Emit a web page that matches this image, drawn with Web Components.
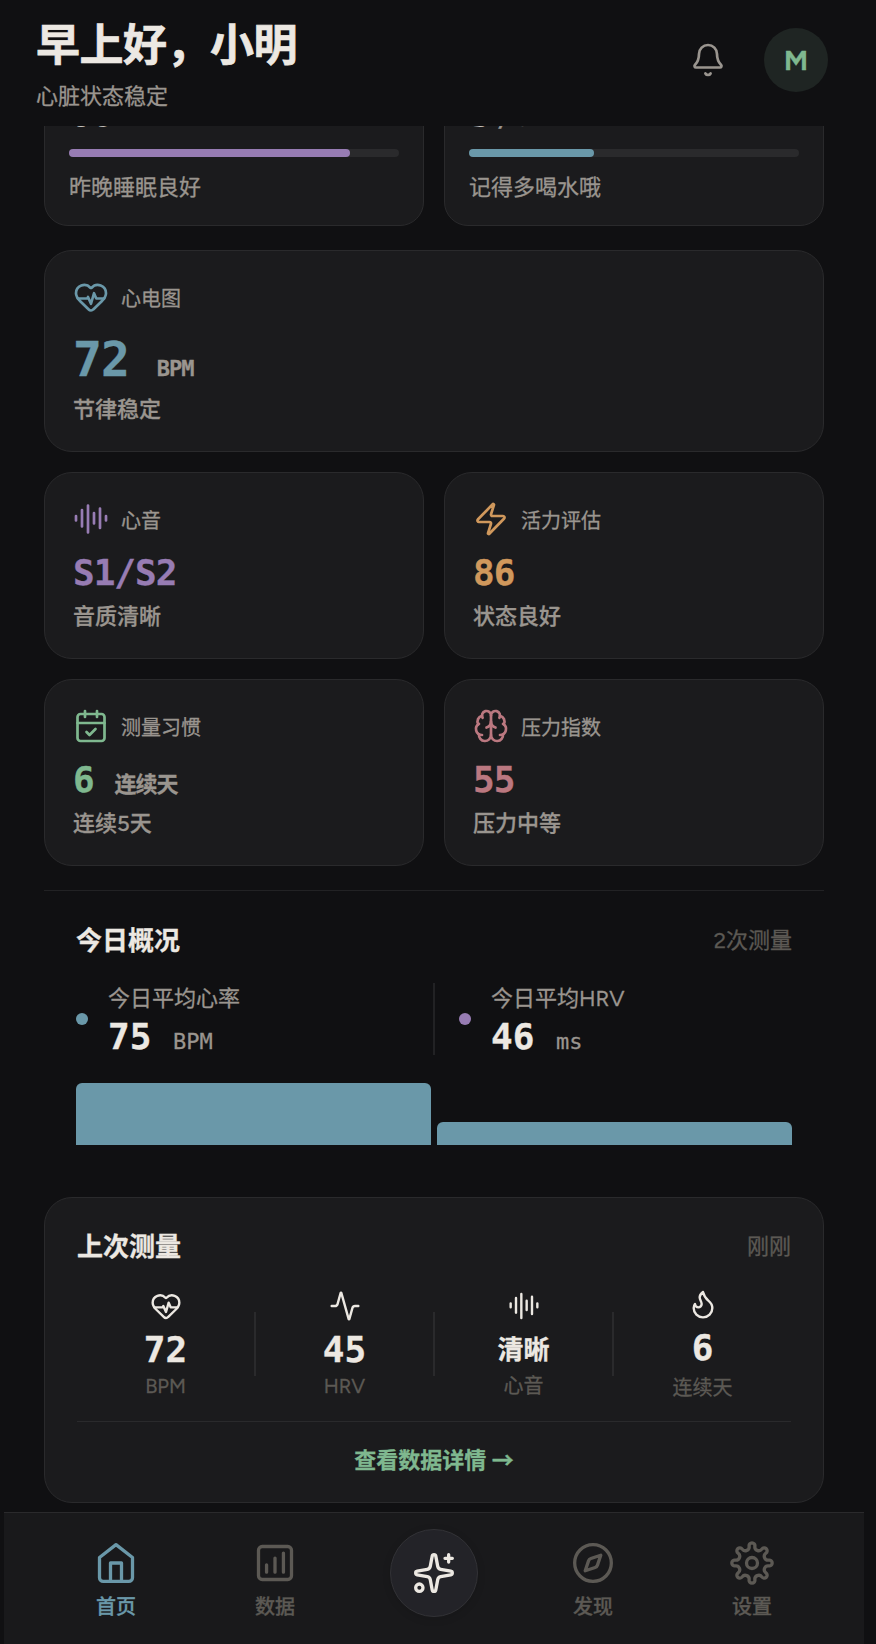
<!DOCTYPE html>
<html lang="zh-CN">
<head>
<meta charset="UTF-8">
<title>心脏健康</title>
<style>
  :root {
    --bg: #101012;
    --card: #1b1b1d;
    --line: #2a2a2c;
    --text: #ece8e2;
    --muted: #9a958f;
    --dim: #5c5954;
    --blue: #6a98a9;
    --purple: #977cb3;
    --orange: #d0985c;
    --green: #7fb88f;
    --rose: #bb7880;
    --mono: 'DejaVu Sans Mono', 'Noto Sans CJK SC', monospace;
  }
  body {
    margin: 0;
    background: var(--bg);
    color: var(--text);
    font-family: Figtree, 'Noto Sans CJK SC', sans-serif;
    -webkit-text-stroke: .3px;
  }
</style>
</head>
<body>
<health-app>
  <app-header slot="header" name="早上好，小明" status="心脏状态稳定" initial="M"></app-header>

  <div class="pair first">
    <progress-card value="85" percent="85" note="昨晚睡眠良好" color="var(--purple)"></progress-card>
    <progress-card value="3" total="/8" percent="38" note="记得多喝水哦" color="var(--blue)"></progress-card>
  </div>
  <metric-card large icon="heart" label="心电图" value="72" unit="BPM" note="节律稳定" color="var(--blue)"></metric-card>
  <div class="pair">
    <metric-card icon="wave" label="心音" value="S1/S2" note="音质清晰" color="var(--purple)"></metric-card>
    <metric-card icon="zap" label="活力评估" value="86" note="状态良好" color="var(--orange)"></metric-card>
    <metric-card icon="calendar" label="测量习惯" value="6" unit="连续天" note="连续5天" color="var(--green)"></metric-card>
    <metric-card icon="brain" label="压力指数" value="55" note="压力中等" color="var(--rose)"></metric-card>
  </div>

  <today-overview>
    <today-stat label="今日平均心率" value="75" unit="BPM" color="var(--blue)"></today-stat>
    <i class="rule"></i>
    <today-stat label="今日平均HRV" value="46" unit="ms" color="var(--purple)"></today-stat>
  </today-overview>

  <last-measure>
    <measure-stat icon="heart" value="72" label="BPM"></measure-stat>
    <i class="rule"></i>
    <measure-stat icon="activity" value="45" label="HRV"></measure-stat>
    <i class="rule"></i>
    <measure-stat icon="wave" value="清晰" label="心音" small></measure-stat>
    <i class="rule"></i>
    <measure-stat icon="flame" value="6" label="连续天"></measure-stat>
  </last-measure>

  <tab-bar slot="nav"></tab-bar>
</health-app>

<script>
// eight round teeth around the centre: outer arcs for teeth, inner arcs for valleys
function gearPath() {
  const point = deg => {
    const a = deg * Math.PI / 180;
    return `${(12 + 9.282 * Math.sin(a)).toFixed(3)} ${(12 - 9.282 * Math.cos(a)).toFixed(3)}`;
  };
  let d = `M${point(-9.79)}`;
  for (let i = 0; i < 8; i++) {
    d += `A1.6 1.6 0 1 1 ${point(i * 45 + 9.79)}`;
    d += `A2.1 2.1 0 0 0 ${point(i * 45 + 35.21)}`;
  }
  return d + 'Z';
}

const ICONS = {
  bell: '<path d="M10.268 21a2 2 0 0 0 3.464 0"/><path d="M3.262 15.326A1 1 0 0 0 4 17h16a1 1 0 0 0 .74-1.673C19.41 13.956 18 12.499 18 8A6 6 0 0 0 6 8c0 4.499-1.411 5.956-2.738 7.326"/>',
  heart: '<path d="M2 9.5a5.5 5.5 0 0 1 9.591-3.676.56.56 0 0 0 .818 0A5.49 5.49 0 0 1 22 9.5c0 2.29-1.5 4-3 5.5l-5.492 5.313a2 2 0 0 1-3 .019L5 15c-1.5-1.5-3-3.2-3-5.5"/><path d="M3.22 13H9.5l.5-1 2 4.5 2-7 1.5 3.5h5.27"/>',
  wave: '<path d="M2 10v3M6 6v11M10 3v18M14 8v7M18 5v13M22 10v3"/>',
  zap: '<path d="M4 14a1 1 0 0 1-.78-1.63l9.9-10.2a.5.5 0 0 1 .86.46l-1.92 6.02A1 1 0 0 0 13 10h7a1 1 0 0 1 .78 1.63l-9.9 10.2a.5.5 0 0 1-.86-.46l1.92-6.02A1 1 0 0 0 11 14z"/>',
  calendar: '<path d="M8 2v4M16 2v4"/><rect width="18" height="18" x="3" y="4" rx="2"/><path d="M3 10h18"/><path d="m9 16 2 2 4-4"/>',
  brain: '<path d="M12 18V5"/><path d="M15 13a4.17 4.17 0 0 1-3-4 4.17 4.17 0 0 1-3 4"/><path d="M17.598 6.5A3 3 0 1 0 12 5a3 3 0 1 0-5.598 1.5"/><path d="M17.997 5.125a4 4 0 0 1 2.526 5.77"/><path d="M18 18a4 4 0 0 0 2-7.464"/><path d="M19.967 17.483A4 4 0 1 1 12 18a4 4 0 1 1-7.967-.517"/><path d="M6 18a4 4 0 0 1-2-7.464"/><path d="M6.003 5.125a4 4 0 0 0-2.526 5.77"/>',
  activity: '<path d="M22 12h-2.48a2 2 0 0 0-1.93 1.46l-2.35 8.36a.25.25 0 0 1-.48 0L9.24 2.18a.25.25 0 0 0-.48 0l-2.35 8.36A2 2 0 0 1 4.49 12H2"/>',
  flame: '<path d="M12 3q1 4 4 6.5t3 5.5a1 1 0 0 1-14 0 5 5 0 0 1 1-3 1 1 0 0 0 5 0c0-2-1.5-3-1.5-5q0-2 2.5-4"/>',
  home: '<path d="m3 9 9-7 9 7v11a2 2 0 0 1-2 2H5a2 2 0 0 1-2-2z"/><path d="M9 22V12h6v10"/>',
  chart: '<rect width="18" height="18" x="3" y="3" rx="2"/><path d="M7.4 17v-4M12 17V9.3M16.6 17V6.6"/>',
  sparkles: '<path d="M11.017 2.814a1 1 0 0 1 1.966 0l1.051 5.558a2 2 0 0 0 1.594 1.594l5.558 1.051a1 1 0 0 1 0 1.966l-5.558 1.051a2 2 0 0 0-1.594 1.594l-1.051 5.558a1 1 0 0 1-1.966 0l-1.051-5.558a2 2 0 0 0-1.594-1.594l-5.558-1.051a1 1 0 0 1 0-1.966l5.558-1.051a2 2 0 0 0 1.594-1.594z"/><path d="M20 2v4M22 4h-4"/><circle cx="4" cy="20" r="2"/>',
  compass: '<circle cx="12" cy="12" r="10"/><path d="m16.24 7.76-1.804 5.411a2 2 0 0 1-1.265 1.265L7.76 16.24l1.804-5.411a2 2 0 0 1 1.265-1.265z"/>',
  settings: `<circle cx="12" cy="12" r="3"/><path d="${gearPath()}"/>`
};

class UiIcon extends HTMLElement {
  connectedCallback() {
    const size = this.getAttribute('size') || 36;
    this.attachShadow({ mode: 'open' }).innerHTML = `
      <style>
        :host { display: block; flex: none; width: ${size}px; height: ${size}px; }
        svg { display: block; overflow: visible; }
      </style>
      <svg width="${size}" height="${size}" viewBox="0 0 24 24" fill="none" stroke="currentColor"
        stroke-width="1.8" stroke-linecap="round" stroke-linejoin="round">${ICONS[this.getAttribute('name')]}</svg>
    `;
  }
}

class HealthApp extends HTMLElement {
  connectedCallback() {
    this.attachShadow({ mode: 'open' }).innerHTML = `
      <style>
        :host {
          display: flex;
          flex-direction: column;
          height: 1644px;
          margin: 0 12px 0 4px;
        }
        main {
          flex: 1;
          min-height: 0;
          overflow: hidden;
          padding: 0 40px;
        }
        ::slotted(.pair) {
          display: grid;
          grid-template-columns: 1fr 1fr;
          gap: 20px;
          margin-top: 20px;
        }
        /* list is scrolled, so the first row starts under the header */
        ::slotted(.first) { margin: -61px 0 24px; }
      </style>
      <slot name="header"></slot>
      <main><slot></slot></main>
      <slot name="nav"></slot>
    `;
  }
}

class AppHeader extends HTMLElement {
  connectedCallback() {
    this.attachShadow({ mode: 'open' }).innerHTML = `
      <style>
        :host {
          display: flex;
          align-items: flex-start;
          justify-content: space-between;
          box-sizing: border-box;
          height: 126px;
          padding: 0 36px 0 32px;
        }
        h1 {
          margin: 10px 0 0;
          font-size: 44px;
          font-weight: 700;
          letter-spacing: -.5px;
          -webkit-text-stroke: .7px;
        }
        p { margin: 4px 0 0; font-size: 22px; color: var(--muted); }
        .actions { display: flex; align-items: center; gap: 38px; margin-top: 28px; color: var(--muted); }
        .avatar {
          display: flex;
          align-items: center;
          justify-content: center;
          width: 64px;
          height: 64px;
          border-radius: 50%;
          background: #1f2523;
          color: var(--green);
          font-size: 28px;
          font-weight: 700;
        }
      </style>
      <div>
        <h1>${this.getAttribute('name')}</h1>
        <p>${this.getAttribute('status')}</p>
      </div>
      <div class="actions">
        <ui-icon name="bell"></ui-icon>
        <div class="avatar">${this.getAttribute('initial')}</div>
      </div>
    `;
  }
}

class ProgressCard extends HTMLElement {
  connectedCallback() {
    const total = this.getAttribute('total');
    this.attachShadow({ mode: 'open' }).innerHTML = `
      <style>
        :host {
          display: block;
          box-sizing: border-box;
          height: 161px;
          padding: 23px 24px;
          border: 1px solid var(--line);
          border-radius: 24px;
          background: var(--card);
        }
        .value { font: 700 40px/47px var(--mono); }
        .value span { margin-left: 4px; font-size: 28px; line-height: 1; font-weight: 400; color: var(--muted); }
        .track { height: 8px; margin-top: 13px; border-radius: 4px; background: var(--line); }
        .fill { width: ${this.getAttribute('percent')}%; height: 8px; border-radius: 4px; background: ${this.getAttribute('color')}; }
        p { margin: 12px 0 0; font-size: 22px; color: var(--muted); }
      </style>
      <div class="value">${this.getAttribute('value')}${total ? `<span>${total}</span>` : ''}</div>
      <div class="track"><div class="fill"></div></div>
      <p>${this.getAttribute('note')}</p>
    `;
  }
}

class MetricCard extends HTMLElement {
  connectedCallback() {
    const unit = this.getAttribute('unit');
    this.attachShadow({ mode: 'open' }).innerHTML = `
      <style>
        :host {
          display: block;
          box-sizing: border-box;
          height: 187px;
          padding: 28px;
          border: 1px solid var(--line);
          border-radius: 28px;
          background: var(--card);
          color: var(--muted);
        }
        :host([large]) { height: 202px; }
        .head { display: flex; align-items: center; gap: 12px; font-size: 20px; }
        .value {
          margin-top: 15px;
          font: 700 36px/42px var(--mono);
          letter-spacing: -1px;
        }
        :host([large]) .value { margin-top: 16px; font-size: 48px; line-height: 56px; }
        ui-icon, b { color: ${this.getAttribute('color')}; }
        .value span { font-size: 22px; line-height: 1; }
        p { margin: 4px 0 0; font-size: 22px; font-weight: 500; }
      </style>
      <div class="head"><ui-icon name="${this.getAttribute('icon')}"></ui-icon><span>${this.getAttribute('label')}</span></div>
      <div class="value"><b>${this.getAttribute('value')}</b>${unit ? ` <span>${unit}</span>` : ''}</div>
      <p>${this.getAttribute('note')}</p>
    `;
  }
}

class TodayOverview extends HTMLElement {
  connectedCallback() {
    this.attachShadow({ mode: 'open' }).innerHTML = `
      <style>
        :host {
          display: block;
          margin-top: 24px;
          padding: 28px 32px 0;
          border-top: 1px solid #222224;
        }
        header { display: flex; justify-content: space-between; align-items: center; height: 38px; }
        h2 { margin: 0; font-size: 26px; font-weight: 700; }
        header span { font-size: 22px; color: var(--dim); }
        .stats { display: flex; align-items: center; gap: 24px; height: 78px; margin-top: 23px; }
        ::slotted(today-stat) { flex: 1; }
        ::slotted(.rule) { width: 2px; height: 72px; background: #222224; }
        .bars { display: flex; align-items: flex-end; gap: 6px; height: 62px; margin-top: 25px; }
        .bars div { flex: 1; border-radius: 6px 6px 0 0; background: var(--blue); }
      </style>
      <header><h2>今日概况</h2><span>2次测量</span></header>
      <div class="stats"><slot></slot></div>
      <div class="bars">
        <div style="height: 62px"></div>
        <div style="height: 23px"></div>
      </div>
    `;
  }
}

class TodayStat extends HTMLElement {
  connectedCallback() {
    this.attachShadow({ mode: 'open' }).innerHTML = `
      <style>
        :host { display: flex; align-items: center; gap: 20px; color: var(--muted); }
        .dot { width: 12px; height: 12px; border-radius: 50%; background: ${this.getAttribute('color')}; }
        .label { font-size: 22px; }
        .value { margin-top: 4px; font: 700 36px/42px var(--mono); }
        b { color: var(--text); }
        .value span { font-size: 22px; line-height: 1; font-weight: 400; }
      </style>
      <div class="dot"></div>
      <div>
        <div class="label">${this.getAttribute('label')}</div>
        <div class="value"><b>${this.getAttribute('value')}</b> <span>${this.getAttribute('unit')}</span></div>
      </div>
    `;
  }
}

class LastMeasure extends HTMLElement {
  connectedCallback() {
    this.attachShadow({ mode: 'open' }).innerHTML = `
      <style>
        :host {
          display: block;
          box-sizing: border-box;
          height: 306px;
          margin-top: 52px;
          padding: 27px 32px 28px;
          border: 1px solid var(--line);
          border-radius: 28px;
          background: var(--card);
        }
        header { display: flex; justify-content: space-between; align-items: center; height: 38px; }
        h2 { margin: 0; font-size: 26px; font-weight: 700; }
        header span { font-size: 22px; color: var(--dim); }
        .stats { display: flex; align-items: center; height: 114px; margin-top: 24px; }
        ::slotted(measure-stat) { flex: 1; }
        ::slotted(.rule) { width: 2px; height: 64px; background: var(--line); }
        .link {
          margin-top: 20px;
          padding-top: 20px;
          border-top: 1px solid var(--line);
          font-size: 22px;
          font-weight: 600;
          text-align: center;
          color: var(--green);
        }
        .link span { font-family: 'Noto Sans CJK SC', sans-serif; }
      </style>
      <header><h2>上次测量</h2><span>刚刚</span></header>
      <div class="stats"><slot></slot></div>
      <div class="link">查看数据详情 <span>→</span></div>
    `;
  }
}

class MeasureStat extends HTMLElement {
  connectedCallback() {
    this.attachShadow({ mode: 'open' }).innerHTML = `
      <style>
        :host { display: flex; flex-direction: column; align-items: center; }
        .value { margin-top: 7px; font-family: var(--mono); font-size: 36px; font-weight: 700; }
        :host([small]) .value { font-size: 26px; }
        .label { margin-top: 4px; font-size: 20px; color: var(--dim); }
      </style>
      <ui-icon name="${this.getAttribute('icon')}" size="32"></ui-icon>
      <div class="value">${this.getAttribute('value')}</div>
      <div class="label">${this.getAttribute('label')}</div>
    `;
  }
}

class TabBar extends HTMLElement {
  connectedCallback() {
    this.attachShadow({ mode: 'open' }).innerHTML = `
      <style>
        :host {
          display: grid;
          grid-template-columns: repeat(5, 159px);
          justify-content: center;
          box-sizing: border-box;
          height: 132px;
          border-top: 1px solid var(--line);
          background: #19191b;
          color: var(--dim);
        }
        .tab {
          display: flex;
          flex-direction: column;
          align-items: center;
          gap: 6px;
          padding-top: 28px;
          font-size: 20px;
          font-weight: 500;
        }
        .active { color: var(--blue); }
        .main {
          display: flex;
          align-items: center;
          justify-content: center;
          box-sizing: border-box;
          width: 88px;
          height: 88px;
          margin: 16px auto 0;
          border: 1px solid #323236;
          border-radius: 50%;
          background: #232328;
          box-shadow: 0 2px 8px rgba(0, 0, 0, .12);
          color: var(--text);
        }
      </style>
      <div class="tab active"><ui-icon name="home" size="44"></ui-icon>首页</div>
      <div class="tab"><ui-icon name="chart" size="44"></ui-icon>数据</div>
      <div class="main"><ui-icon name="sparkles" size="44"></ui-icon></div>
      <div class="tab"><ui-icon name="compass" size="44"></ui-icon>发现</div>
      <div class="tab"><ui-icon name="settings" size="44"></ui-icon>设置</div>
    `;
  }
}

customElements.define('ui-icon', UiIcon);
customElements.define('health-app', HealthApp);
customElements.define('app-header', AppHeader);
customElements.define('progress-card', ProgressCard);
customElements.define('metric-card', MetricCard);
customElements.define('today-overview', TodayOverview);
customElements.define('today-stat', TodayStat);
customElements.define('last-measure', LastMeasure);
customElements.define('measure-stat', MeasureStat);
customElements.define('tab-bar', TabBar);
</script>
</body>
</html>
